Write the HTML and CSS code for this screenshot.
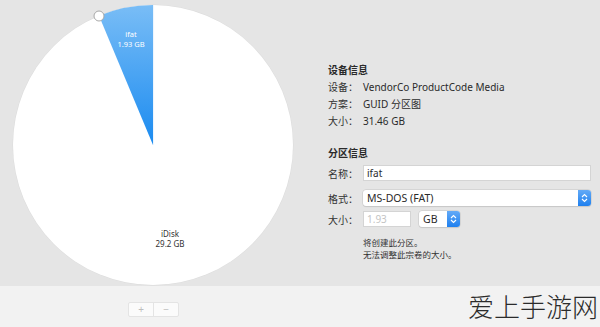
FILE: index.html
```html
<!DOCTYPE html>
<html lang="zh-CN">
<head>
  <meta charset="UTF-8">
  <title>分区</title>
  <link rel="stylesheet" href="styles.css">
</head>
<body>
  <div class="window">
    <div class="main">
      <div class="chart">
        <svg width="306" height="286" viewBox="0 0 306 286">
          <defs>
            <linearGradient id="slice" x1="0" y1="0" x2="0" y2="1">
              <stop offset="0" stop-color="#79bdf6"/>
              <stop offset="1" stop-color="#1b8bf0"/>
            </linearGradient>
          </defs>
          <circle cx="153" cy="145" r="140.5" fill="#dcdcdc"/>
          <circle cx="153" cy="145" r="140" fill="#fff"/>
          <path d="M153 145 L153 5 A140 140 0 0 0 99 15.8 Z" fill="url(#slice)"/>
          <line x1="153.6" y1="5" x2="153.6" y2="145" stroke="#eaf4fe" stroke-width="1"/>
          <circle cx="99" cy="16" r="5" fill="#fff" stroke="#a8a8a8" stroke-width="1"/>
          <text class="slice-label" x="131" y="37">ifat</text>
          <text class="slice-label" x="131" y="47">1.93 GB</text>
          <text class="disk-label" x="170" y="237">iDisk</text>
          <text class="disk-label" x="170" y="247">29.2 GB</text>
        </svg>
      </div>

      <div class="info">
        <div class="section-title">设备信息</div>
        <div class="row"><span class="label">设备：</span><span>VendorCo ProductCode Media</span></div>
        <div class="row"><span class="label">方案：</span><span>GUID 分区图</span></div>
        <div class="row"><span class="label">大小：</span><span>31.46 GB</span></div>

        <div class="section-title second">分区信息</div>
        <div class="form-row name-row">
          <span class="label">名称：</span>
          <div class="field wide">ifat</div>
        </div>
        <div class="form-row format-row">
          <span class="label">格式：</span>
          <div class="popup wide">
            <span class="popup-text">MS-DOS (FAT)</span>
            <span class="stepper">
              <svg width="7" height="10" viewBox="0 0 7 10"><path d="M1 4 L3.5 1.5 L6 4 M1 6 L3.5 8.5 L6 6" fill="none" stroke="#fff" stroke-width="1.1"/></svg>
            </span>
          </div>
        </div>
        <div class="form-row size-row">
          <span class="label">大小：</span>
          <div class="field small placeholder">1.93</div>
          <div class="popup unit">
            <span class="popup-text">GB</span>
            <span class="stepper">
              <svg width="7" height="10" viewBox="0 0 7 10"><path d="M1 4 L3.5 1.5 L6 4 M1 6 L3.5 8.5 L6 6" fill="none" stroke="#fff" stroke-width="1.1"/></svg>
            </span>
          </div>
        </div>
        <div class="note">
          将创建此分区。<br>
          无法调整此宗卷的大小。
        </div>
      </div>
    </div>

    <div class="bottom">
      <div class="btn-group">
        <span class="btn">+</span>
        <span class="btn">−</span>
      </div>
      <div class="watermark">爱上手游网</div>
    </div>
  </div>
</body>
</html>
```

FILE: styles.css
```css
body, html {
  margin: 0;
  padding: 0;
  font-family: "Noto Sans", "Noto Sans CJK SC", sans-serif;
  color: #2a2a2a;
}

.window {
  width: 600px;
  height: 327px;
  overflow: hidden;
}

.main {
  display: flex;
  height: 286px;
  background-color: #e5e5e5;
}

.chart {
  width: 306px;
  flex: none;
}

.chart svg {
  display: block;
}

.slice-label {
  font-family: "Noto Sans", sans-serif;
  font-size: 7.5px;
  fill: #fff;
  text-anchor: middle;
}

.disk-label {
  font-family: "Noto Sans", sans-serif;
  font-size: 8px;
  fill: #333;
  text-anchor: middle;
}

.info {
  padding: 62px 0 0 22px;
  width: 263px;
  font-size: 10px;
}

.section-title {
  font-weight: bold;
  height: 17px;
  line-height: 17px;
}

.section-title.second {
  margin-top: 15px;
}

.row {
  display: flex;
  height: 17px;
  line-height: 17px;
}

.label {
  width: 35px;
  flex: none;
  color: #333;
}

.form-row {
  display: flex;
  align-items: center;
  height: 16px;
}

.name-row {
  margin-top: 3px;
}

.format-row {
  margin-top: 9px;
}

.size-row {
  margin-top: 5px;
}

.field {
  box-sizing: border-box;
  height: 16px;
  line-height: 14px;
  padding: 0 3px;
  background-color: #fff;
  border: 1px solid #d4d4d4;
}

.field.wide {
  width: 228px;
}

.field.small {
  width: 48px;
}

.placeholder {
  color: #c4c4c4;
}

.popup {
  box-sizing: border-box;
  display: flex;
  height: 16px;
  background-color: #fff;
  border-radius: 3px;
  box-shadow: 0 0 0 0.5px #c6c6c6, 0 1px 1px rgba(0, 0, 0, 0.12);
  overflow: hidden;
}

.popup.wide {
  width: 228px;
}

.popup.unit {
  width: 41px;
  margin-left: 8px;
}

.popup-text {
  flex: 1;
  line-height: 16px;
  padding-left: 4px;
  font-size: 10.5px;
}

.stepper {
  width: 13px;
  flex: none;
  display: flex;
  align-items: center;
  justify-content: center;
  background: linear-gradient(#63aaf7, #1f80ef);
}

.note {
  margin: 10px 0 0 35px;
  font-size: 8.5px;
  line-height: 11.5px;
  color: #333;
}

.bottom {
  display: flex;
  align-items: flex-start;
  height: 41px;
  background-color: #f2f2f2;
}

.btn-group {
  display: flex;
  margin: 16px 0 0 128px;
  background-color: #fbfbfb;
  border: 1px solid #e4e4e4;
  border-radius: 2px;
}

.btn {
  width: 24px;
  height: 13px;
  line-height: 13px;
  text-align: center;
  font-size: 10px;
  color: #bdbdbd;
}

.btn + .btn {
  border-left: 1px solid #e4e4e4;
}

.watermark {
  margin: 3px 2px 0 auto;
  font-family: "Noto Sans CJK SC", sans-serif;
  font-weight: 300;
  font-size: 26px;
  line-height: 34px;
  color: #2b2b2b;
}
```
